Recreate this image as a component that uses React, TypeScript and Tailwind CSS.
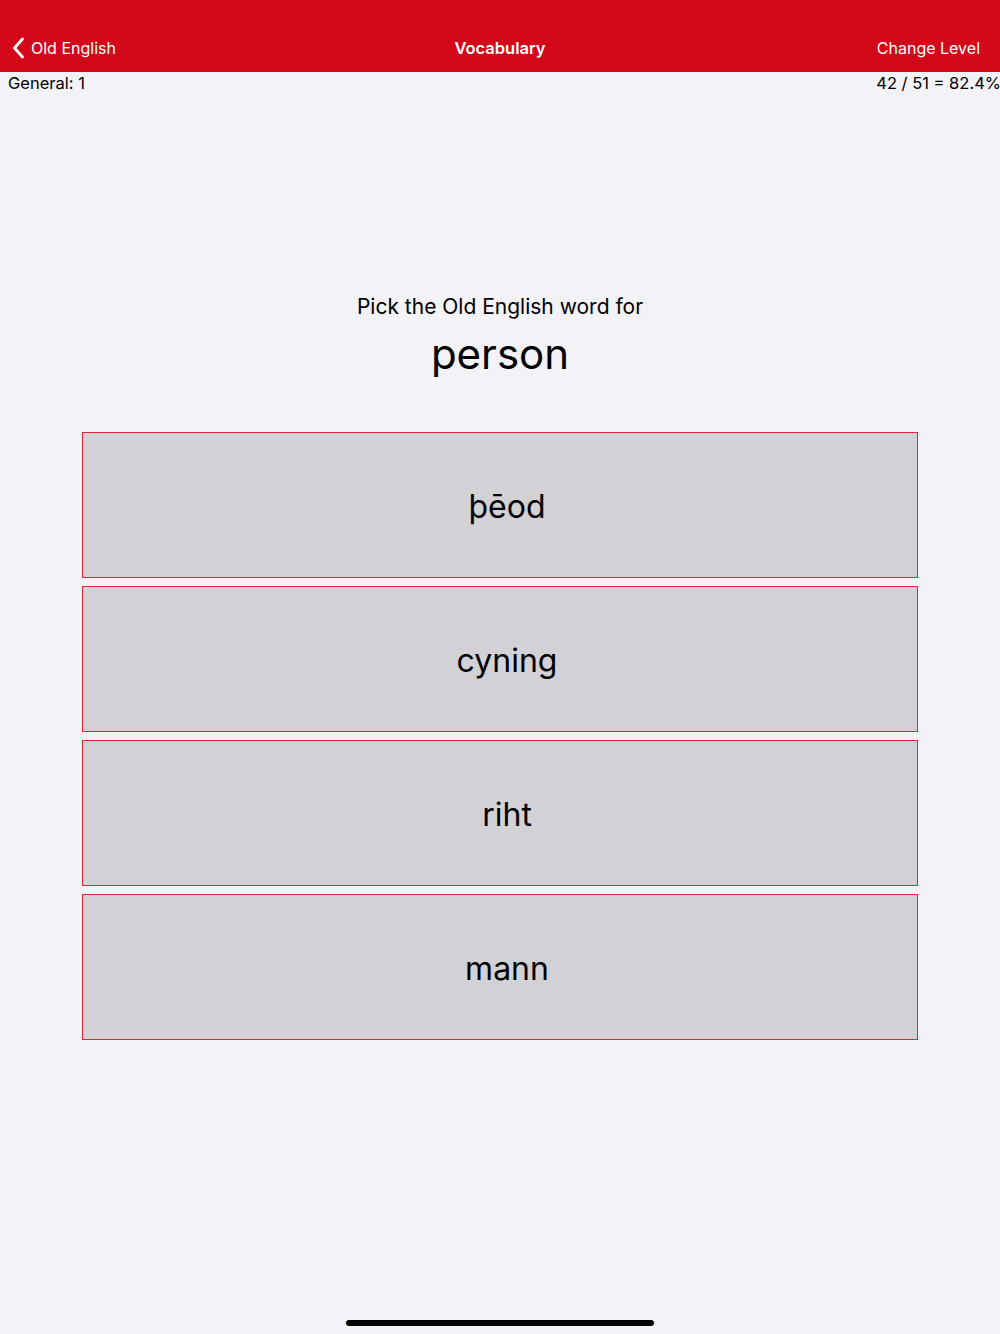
import React from "react";

const options = ["þēod", "cyning", "riht", "mann"];

export default function App() {
  return (
    <div
      className="w-[1000px] h-[1334px] bg-[#f2f2f7] flex flex-col relative overflow-hidden"
      style={{ fontFamily: 'Inter, "Noto Sans", sans-serif' }}
    >
      <div className="h-[72px] bg-[#d2081a] flex items-end pb-[12px] relative shrink-0">
        <div className="flex items-center pl-[12px] text-white text-[16px] leading-[24px]">
          <svg width="13" height="22" viewBox="0 0 13 22" className="mr-[6px]">
            <path d="M10.5 2 L2.5 11 L10.5 20" fill="none" stroke="white" strokeWidth="2.8" strokeLinecap="round" strokeLinejoin="round" />
          </svg>
          <span>Old English</span>
        </div>
        <div className="absolute left-0 right-0 bottom-[12px] text-center text-white text-[16.5px] leading-[24px] font-semibold pointer-events-none">
          Vocabulary
        </div>
        <div className="ml-auto pr-[20px] text-white text-[16px] leading-[24px]">Change Level</div>
      </div>
      <div className="flex justify-between pl-[8px] text-[16.5px] leading-[22px] text-black">
        <span>General: 1</span>
        <span className="-mr-[1px]">42 / 51 = 82.4%</span>
      </div>
      <div className="mt-[199px] text-center text-[21px] leading-[28px] text-black">Pick the Old English word for</div>
      <div className="mt-[7px] text-center text-[42px] leading-[52px] text-black">person</div>
      <div className="mt-[52px] flex flex-col gap-[8px] px-[82px]">
        {options.map((o) => (
          <div
            key={o}
            className="h-[146px] bg-[#d1d1d6] border border-[#e0243a] flex items-center justify-center text-[32px] text-black pl-[14px] pt-[3px]"
          >
            {o}
          </div>
        ))}
      </div>
      <div className="absolute left-[346px] top-[1320px] w-[308px] h-[6px] rounded-full bg-black" />
    </div>
  );
}
